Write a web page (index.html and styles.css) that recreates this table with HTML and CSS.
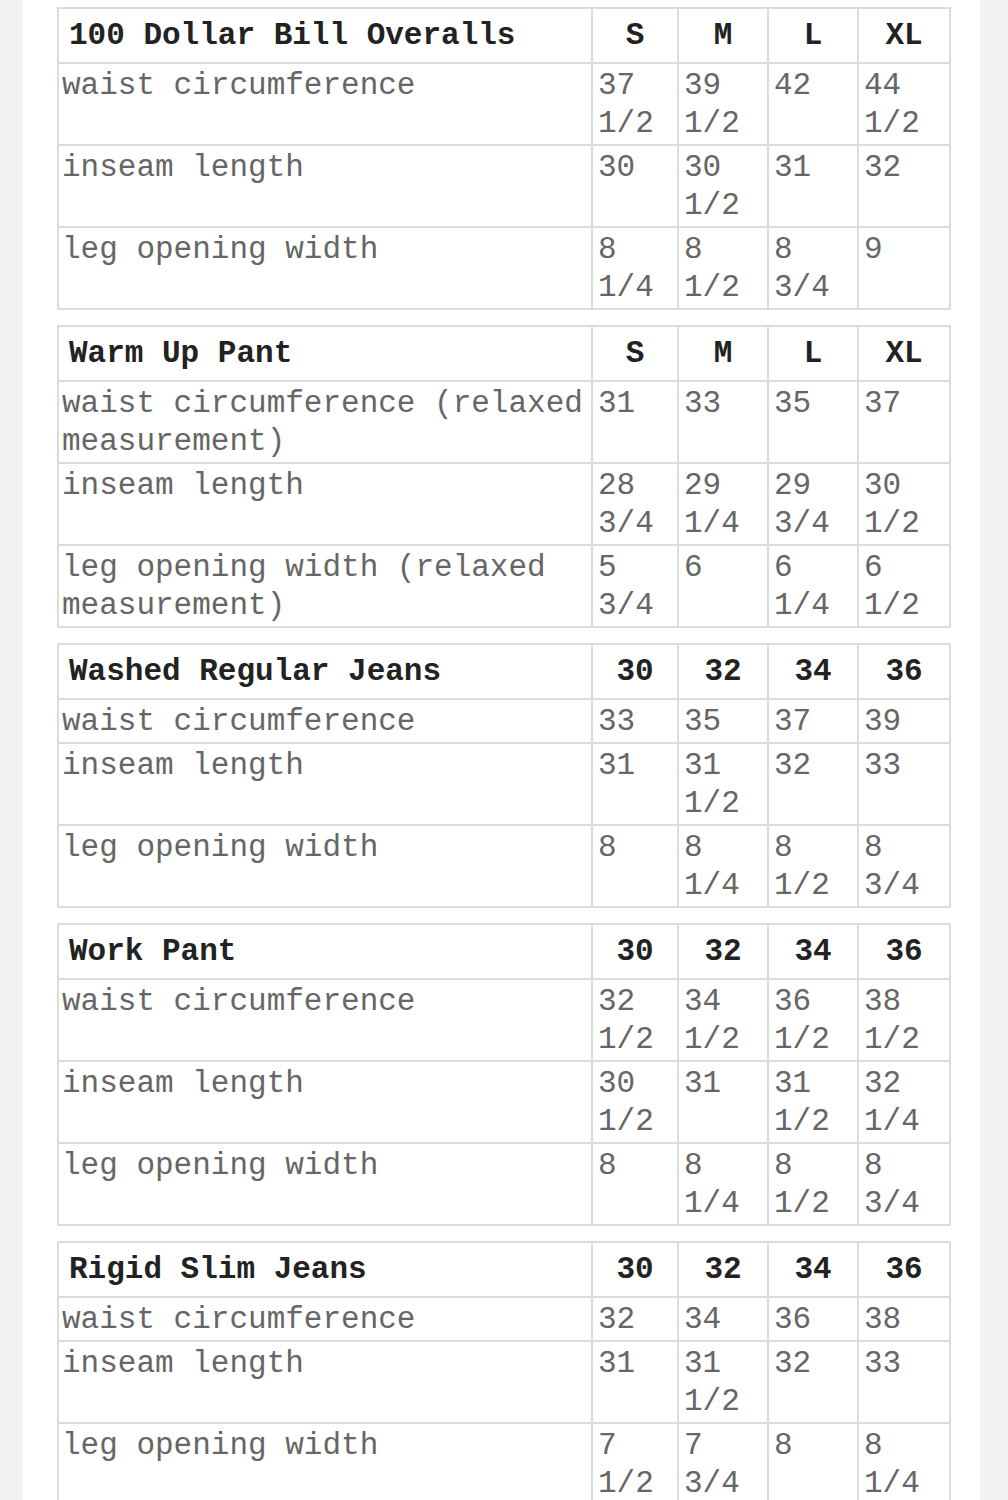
FILE: index.html
```html
<!DOCTYPE html>
<html>
<head>
<meta charset="utf-8">
<link rel="stylesheet" href="styles.css">
</head>
<body>
<div class="page">
  <table class="size-table">
    <colgroup><col class="c-label"><col class="c-size"><col class="c-size2"><col class="c-size2"><col class="c-size3"></colgroup>
    <tr class="head"><th class="title">100 Dollar Bill Overalls</th><th>S</th><th>M</th><th>L</th><th>XL</th></tr>
    <tr><td>waist circumference</td><td>37 1/2</td><td>39 1/2</td><td>42</td><td>44 1/2</td></tr>
    <tr><td>inseam length</td><td>30</td><td>30 1/2</td><td>31</td><td>32</td></tr>
    <tr><td>leg opening width</td><td>8 1/4</td><td>8 1/2</td><td>8 3/4</td><td>9</td></tr>
  </table>

  <table class="size-table">
    <colgroup><col class="c-label"><col class="c-size"><col class="c-size2"><col class="c-size2"><col class="c-size3"></colgroup>
    <tr class="head"><th class="title">Warm Up Pant</th><th>S</th><th>M</th><th>L</th><th>XL</th></tr>
    <tr><td>waist circumference (relaxed measurement)</td><td>31</td><td>33</td><td>35</td><td>37</td></tr>
    <tr><td>inseam length</td><td>28 3/4</td><td>29 1/4</td><td>29 3/4</td><td>30 1/2</td></tr>
    <tr><td>leg opening width (relaxed measurement)</td><td>5 3/4</td><td>6</td><td>6 1/4</td><td>6 1/2</td></tr>
  </table>

  <table class="size-table">
    <colgroup><col class="c-label"><col class="c-size"><col class="c-size2"><col class="c-size2"><col class="c-size3"></colgroup>
    <tr class="head"><th class="title">Washed Regular Jeans</th><th>30</th><th>32</th><th>34</th><th>36</th></tr>
    <tr><td>waist circumference</td><td>33</td><td>35</td><td>37</td><td>39</td></tr>
    <tr><td>inseam length</td><td>31</td><td>31 1/2</td><td>32</td><td>33</td></tr>
    <tr><td>leg opening width</td><td>8</td><td>8 1/4</td><td>8 1/2</td><td>8 3/4</td></tr>
  </table>

  <table class="size-table">
    <colgroup><col class="c-label"><col class="c-size"><col class="c-size2"><col class="c-size2"><col class="c-size3"></colgroup>
    <tr class="head"><th class="title">Work Pant</th><th>30</th><th>32</th><th>34</th><th>36</th></tr>
    <tr><td>waist circumference</td><td>32 1/2</td><td>34 1/2</td><td>36 1/2</td><td>38 1/2</td></tr>
    <tr><td>inseam length</td><td>30 1/2</td><td>31</td><td>31 1/2</td><td>32 1/4</td></tr>
    <tr><td>leg opening width</td><td>8</td><td>8 1/4</td><td>8 1/2</td><td>8 3/4</td></tr>
  </table>

  <table class="size-table">
    <colgroup><col class="c-label"><col class="c-size"><col class="c-size2"><col class="c-size2"><col class="c-size3"></colgroup>
    <tr class="head"><th class="title">Rigid Slim Jeans</th><th>30</th><th>32</th><th>34</th><th>36</th></tr>
    <tr><td>waist circumference</td><td>32</td><td>34</td><td>36</td><td>38</td></tr>
    <tr><td>inseam length</td><td>31</td><td>31 1/2</td><td>32</td><td>33</td></tr>
    <tr><td>leg opening width</td><td>7 1/2</td><td>7 3/4</td><td>8</td><td>8 1/4</td></tr>
  </table>
</div>
</body>
</html>
```

FILE: styles.css
```css
html, body {
  margin: 0;
  padding: 0;
  background: #f2f2f2;
}

.page {
  margin-left: 23px;
  width: 923px;
  min-height: 1500px;
  background: #ffffff;
  padding: 7px 0 0 34px;
  box-sizing: content-box;
  font-family: "Liberation Mono", "Courier New", monospace;
}

.size-table {
  width: 892px;
  table-layout: fixed;
  border-collapse: collapse;
  border: 2px solid #dcdcdc;
  margin-bottom: 15px;
}

.c-label { width: 534px; }
.c-size { width: 86px; }
.c-size2 { width: 90px; }
.c-size3 { width: 92px; }

.size-table th,
.size-table td {
  border: 2px solid #dcdcdc;
  font-size: 31px;
  vertical-align: top;
  word-wrap: normal;
}

.size-table th {
  font-weight: bold;
  color: #222222;
  text-align: center;
  line-height: 37px;
  padding: 8px 0 8px 0;
}

.size-table th.title {
  text-align: left;
  padding-left: 10px;
}

.size-table td {
  color: #666666;
  text-align: left;
  line-height: 38px;
  padding: 3px 0 1px 5px;
}

.size-table td:first-child {
  padding-left: 3px;
}
```
